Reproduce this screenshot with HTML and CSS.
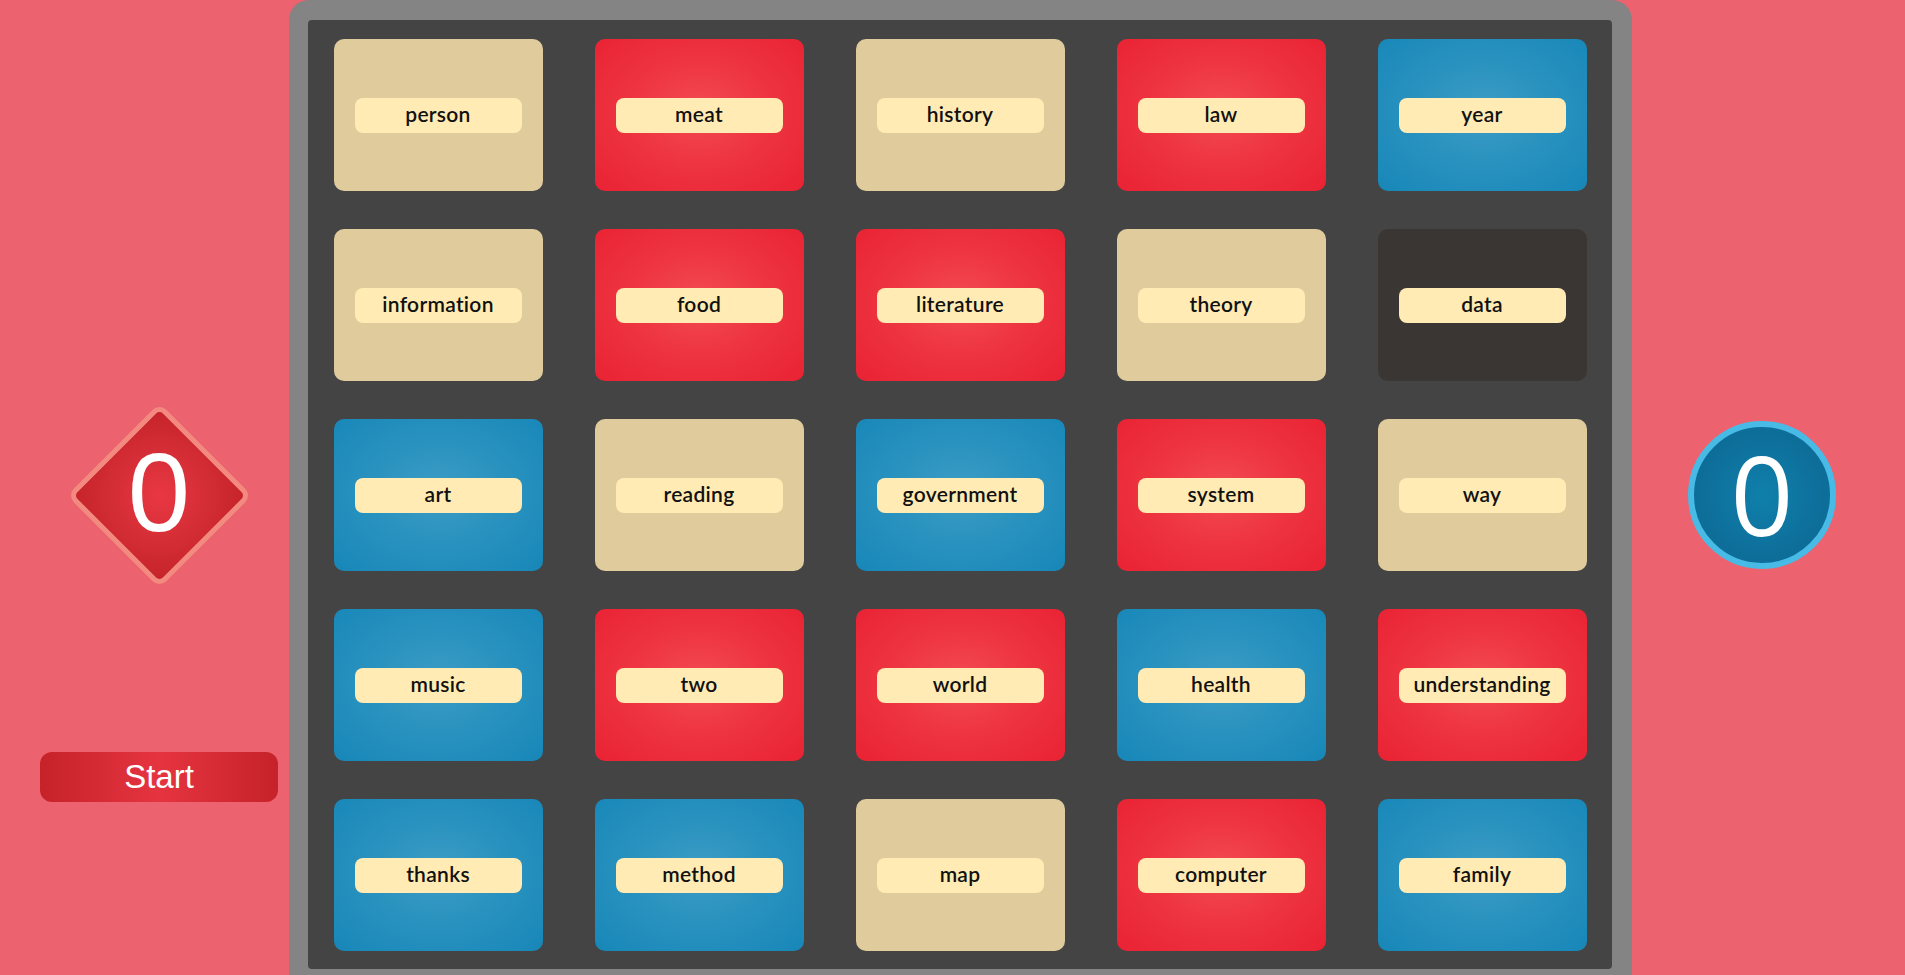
FILE: index.html
```html
<!DOCTYPE html>
<html lang="en">
<head>
<meta charset="utf-8">
<title>Codenames</title>
<link rel="stylesheet" href="styles.css">
</head>
<body>
<div class="app">
  <div class="side side-left">
    <div class="diamond-wrap">
      <div class="diamond"></div>
      <div class="score score-red">0</div>
    </div>
    <button class="start">Start</button>
  </div>
  <div class="board">
    <div class="board-inner">
      <div class="card beige"><span class="label">person</span></div>
      <div class="card red"><span class="label">meat</span></div>
      <div class="card beige"><span class="label">history</span></div>
      <div class="card red"><span class="label">law</span></div>
      <div class="card blue"><span class="label">year</span></div>

      <div class="card beige"><span class="label">information</span></div>
      <div class="card red"><span class="label">food</span></div>
      <div class="card red"><span class="label">literature</span></div>
      <div class="card beige"><span class="label">theory</span></div>
      <div class="card black"><span class="label">data</span></div>

      <div class="card blue"><span class="label">art</span></div>
      <div class="card beige"><span class="label">reading</span></div>
      <div class="card blue"><span class="label">government</span></div>
      <div class="card red"><span class="label">system</span></div>
      <div class="card beige"><span class="label">way</span></div>

      <div class="card blue"><span class="label">music</span></div>
      <div class="card red"><span class="label">two</span></div>
      <div class="card red"><span class="label">world</span></div>
      <div class="card blue"><span class="label">health</span></div>
      <div class="card red"><span class="label">understanding</span></div>

      <div class="card blue"><span class="label">thanks</span></div>
      <div class="card blue"><span class="label">method</span></div>
      <div class="card beige"><span class="label">map</span></div>
      <div class="card red"><span class="label">computer</span></div>
      <div class="card blue"><span class="label">family</span></div>
    </div>
  </div>
  <div class="side side-right">
    <div class="circle"><span class="score score-blue">0</span></div>
  </div>
</div>
</body>
</html>
```

FILE: styles.css
```css
html, body {
  margin: 0;
  padding: 0;
  height: 100%;
  overflow: hidden;
}

body {
  background: #ec626f;
  font-family: "Liberation Sans", Arial, sans-serif;
}

.app {
  display: grid;
  grid-template-columns: 289px 1343px 1fr;
  height: 100vh;
  align-items: start;
}

.side {
  display: flex;
  flex-direction: column;
  align-items: flex-start;
}

.side-left {
  padding-top: 407px;
}

.diamond-wrap {
  width: 176px;
  height: 176px;
  margin-left: 71px;
  display: grid;
  place-items: center;
}

.diamond {
  grid-area: 1 / 1;
  width: 121px;
  height: 121px;
  border: 5px solid #f38a80;
  border-radius: 10px;
  background: radial-gradient(circle at 50% 50%, #e93843 0%, #d42d35 55%, #c5232b 100%);
  transform: rotate(45deg);
}

.score {
  grid-area: 1 / 1;
  color: #ffffff;
  font-size: 112px;
  line-height: 1;
  position: relative;
}

.score-red {
  font-family: "Liberation Sans", Arial, sans-serif;
  top: -2px;
}

.start {
  margin-top: 169px;
  margin-left: 40px;
  width: 238px;
  height: 50px;
  border: none;
  border-radius: 12px;
  background: linear-gradient(to right, #c62229 0%, #e53440 50%, #c62229 100%);
  color: #ffffff;
  font-family: "Liberation Sans", Arial, sans-serif;
  font-size: 33px;
  padding: 0;
  line-height: 50px;
}

.board {
  background: #848484;
  border-radius: 20px 20px 0 0;
  padding: 20px 20px 20px 19px;
}

.board-inner {
  background: #444444;
  border-radius: 4px;
  padding: 19px 25.5px 18px 25.5px;
  display: grid;
  grid-template-columns: repeat(5, 1fr);
  grid-auto-rows: 152px;
  column-gap: 52px;
  row-gap: 38px;
}

.card {
  border-radius: 10px;
  display: flex;
  align-items: center;
  justify-content: center;
}

.beige {
  background: #dfcb9c;
}

.red {
  background: radial-gradient(ellipse at 50% 48%, #f34b53 0%, #ee3541 45%, #e92233 100%);
}

.blue {
  background: radial-gradient(ellipse at 50% 48%, #3c9dc5 0%, #2a92bf 45%, #1787b8 100%);
}

.black {
  background: #3a3633;
}

.label {
  box-sizing: border-box;
  width: 167px;
  height: 35px;
  padding-bottom: 3px;
  border-radius: 8px;
  background: #ffebb3;
  color: #111111;
  font-family: Lato, "Noto Sans", sans-serif;
  font-weight: 600;
  font-size: 21px;
  letter-spacing: 0.3px;
  display: flex;
  align-items: center;
  justify-content: center;
}

.side-right {
  padding-top: 421px;
}

.circle {
  margin-left: 56px;
  width: 136px;
  height: 136px;
  border: 6px solid #47bbe6;
  border-radius: 50%;
  background: radial-gradient(circle at 50% 50%, #0f80ab 0%, #0e6f9b 60%, #0d6894 100%);
  display: flex;
  align-items: center;
  justify-content: center;
}

.score-blue {
  font-family: "Open Sans", "Noto Sans", sans-serif;
  font-size: 110px;
  line-height: 1;
  top: -2px;
}
```
